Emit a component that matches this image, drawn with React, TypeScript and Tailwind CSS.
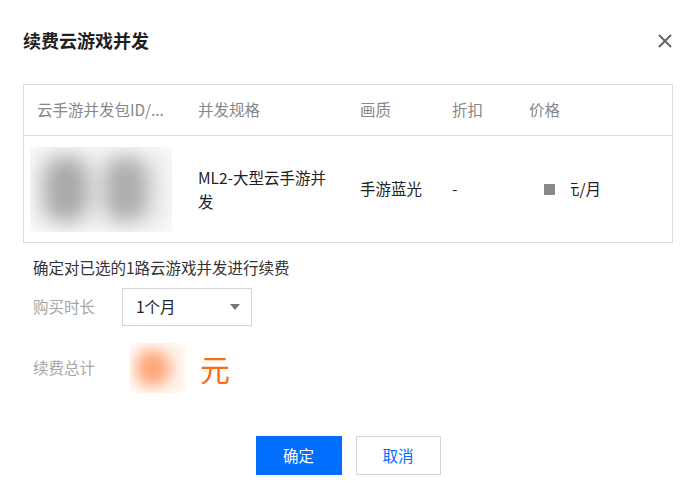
import React from 'react';

const columns = [
  { label: '云手游并发包ID/...', width: 'w-[174px] pl-[13px]' },
  { label: '并发规格', width: 'w-[162px]' },
  { label: '画质', width: 'w-[92px]' },
  { label: '折扣', width: 'w-[77px]' },
  { label: '价格', width: 'flex-1' },
];

const App: React.FC = () => {
  return (
    <div
      className="w-[700px] h-[501px] bg-white pl-[23px] pr-[27px] text-[15.5px] text-[#222]"
      style={{ fontFamily: '"Noto Sans CJK SC", "Noto Sans", sans-serif' }}
    >
      {/* Header */}
      <div className="flex items-center justify-between pt-[27px]">
        <h2 className="text-[18px] leading-[26px] font-bold text-[#1f1f1f]">续费云游戏并发</h2>
        <svg width="16" height="16" viewBox="0 0 16 16" className="mt-[2px]">
          <path d="M2 2 L14 14 M14 2 L2 14" stroke="#666" strokeWidth="2" />
        </svg>
      </div>

      {/* Table */}
      <div className="mt-[31px] border border-[#dcdde2]">
        <div className="flex items-center h-[51px] border-b border-[#dcdde2] text-[#888]">
          {columns.map((c) => (
            <div key={c.label} className={c.width}>
              {c.label}
            </div>
          ))}
        </div>
        <div className="flex items-center h-[106px]">
          <div className="w-[174px] pl-[6px]">
            <div className="w-[142px] h-[85px] overflow-hidden">
              <div className="w-full h-full bg-[#ededed] blur-[10px] flex items-center gap-[16px] pl-[14px]">
                <div className="w-[44px] h-[66px] rounded-full bg-[#a8a8a8]" />
                <div className="w-[44px] h-[66px] rounded-full bg-[#adadad]" />
              </div>
            </div>
          </div>
          <div className="w-[162px] leading-[24px]">
            <div className="w-[136px]">ML2-大型云手游并发</div>
          </div>
          <div className="w-[92px]">手游蓝光</div>
          <div className="w-[77px]">-</div>
          <div className="flex-1 flex items-center pl-[15px]">
            <div className="w-[11px] h-[11px] bg-[#888]" />
            <div className="relative ml-[9px]">
              元/月
              <div className="absolute left-0 top-0 w-[7px] h-full bg-white" />
            </div>
          </div>
        </div>
      </div>

      {/* Form */}
      <div className="pl-[10px]">
        <p className="mt-[13px] leading-[22px] text-[#333]">确定对已选的1路云游戏并发进行续费</p>

        <div className="flex items-center mt-[10px]">
          <span className="w-[89px] text-[#a6a6a6]">购买时长</span>
          <div className="w-[130px] h-[38px] border border-[#d4d5da] flex items-center justify-between pl-[13px] pr-[11px]">
            <span className="text-[#222]">1个月</span>
            <svg width="10" height="6" viewBox="0 0 10 6">
              <path d="M0 0 L10 0 L5 6 Z" fill="#777" />
            </svg>
          </div>
        </div>

        <div className="flex items-center mt-[17px] h-[50px]">
          <span className="w-[97px] text-[#a6a6a6]">续费总计</span>
          <div className="w-[55px] h-[50px] overflow-hidden">
            <div className="w-full h-full bg-[#fff0e6] blur-[7px] flex items-center pl-[6px]">
              <div className="w-[34px] h-[36px] rounded-full bg-[#ffa77a]" />
            </div>
          </div>
          <span className="ml-[15px] text-[30px] leading-none text-[#ff6a14]">元</span>
        </div>
      </div>

      {/* Buttons */}
      <div className="flex justify-center gap-[14px] mt-[43px]">
        <button className="w-[86px] h-[39px] bg-[#006eff] text-white">确定</button>
        <button className="w-[85px] h-[39px] border border-[#d4d5da] text-[#006eff] bg-white">取消</button>
      </div>
    </div>
  );
};

export default App;
